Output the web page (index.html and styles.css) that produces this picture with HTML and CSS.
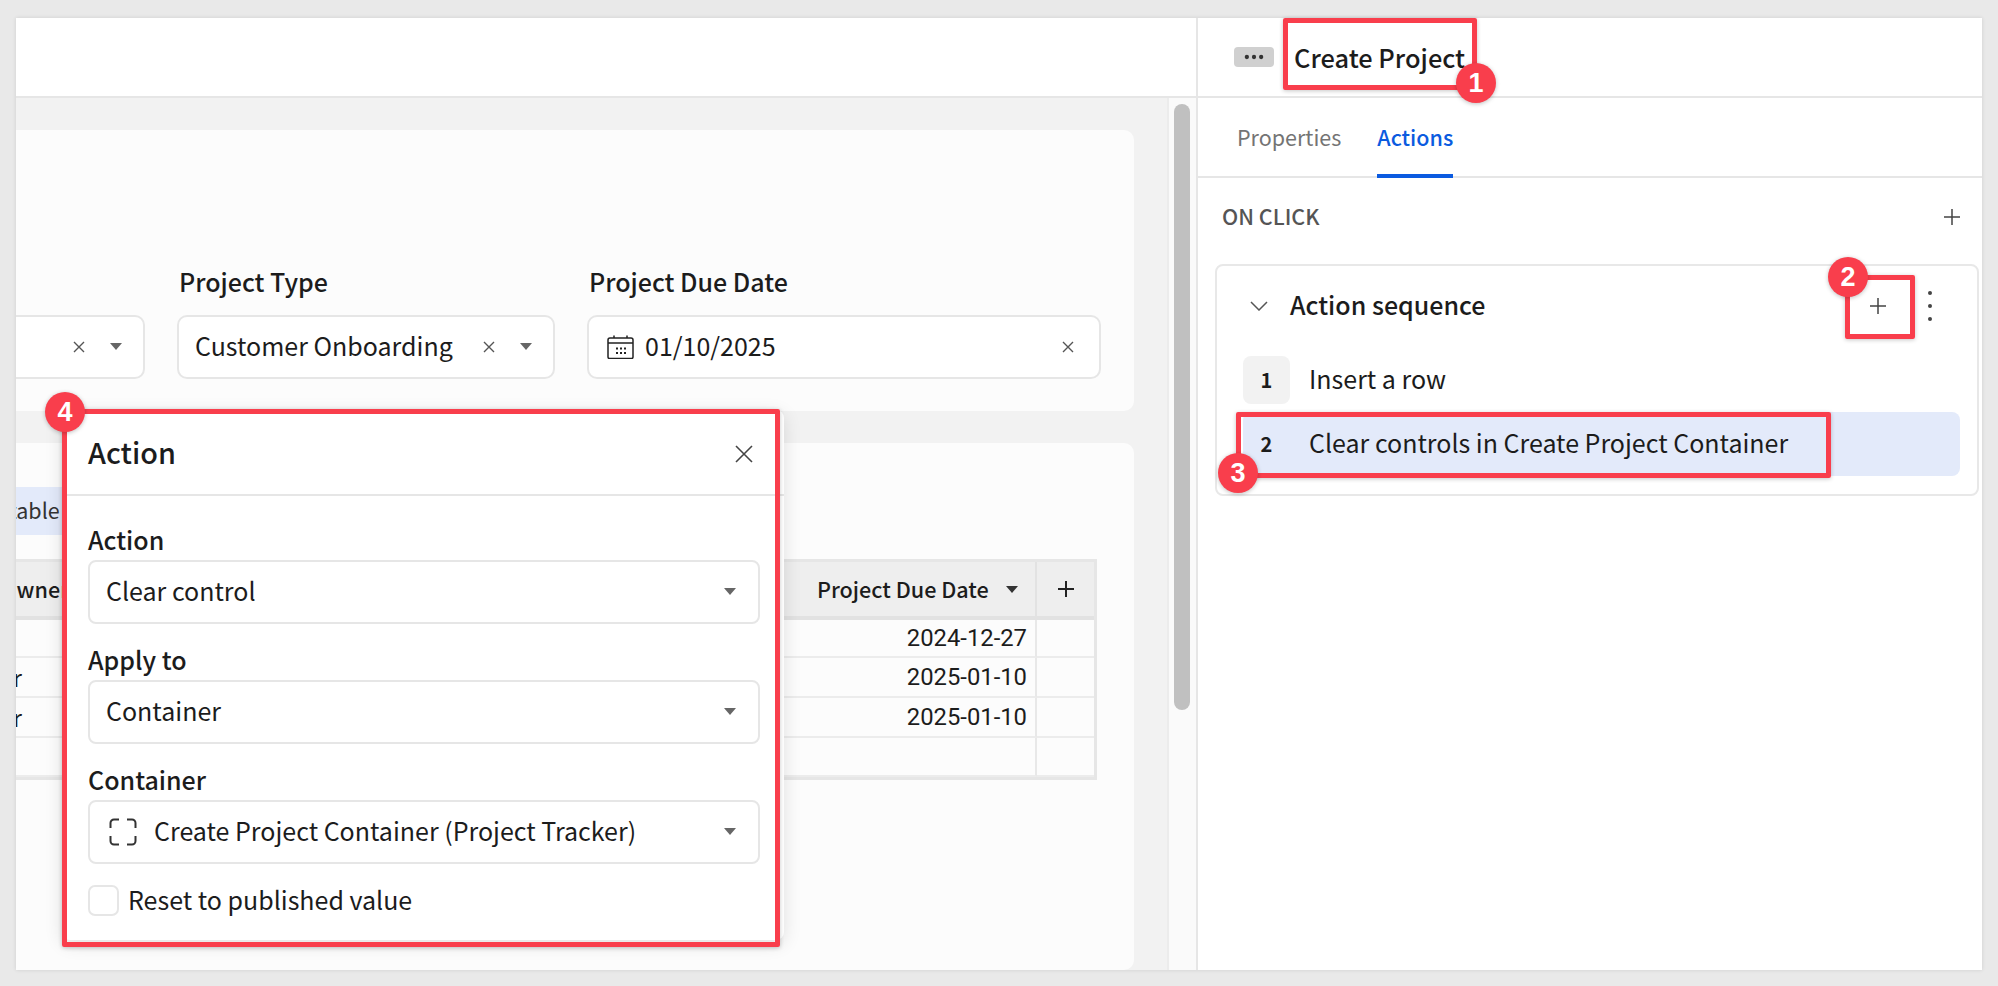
FILE: index.html
```html
<!DOCTYPE html>
<html lang="en">
<head>
<meta charset="utf-8">
<title>Create Project</title>
<link rel="stylesheet" href="styles.css">
</head>
<body>
<div class="window">
  <div class="main">
    <div class="topbar"></div>
    <div class="canvas">
      <div class="scroll-area">
        <section class="card card-form">
          <div class="form-row">
            <div class="field field-a">
              <div class="field-label"></div>
              <div class="input"><span class="input-text"></span>
                <svg class="ico-x" viewBox="0 0 12 12"><path d="M1 1l10 10M11 1L1 11"/></svg>
                <span class="caret"></span></div>
            </div>
            <div class="field field-b">
              <div class="field-label">Project Type</div>
              <div class="input"><span class="input-text">Customer Onboarding</span>
                <svg class="ico-x" viewBox="0 0 12 12"><path d="M1 1l10 10M11 1L1 11"/></svg>
                <span class="caret"></span></div>
            </div>
            <div class="field field-c">
              <div class="field-label">Project Due Date</div>
              <div class="input input-date">
                <svg class="ico-cal" viewBox="0 0 27 24"><path d="M3 3h21a2 2 0 0 1 2 2v17a1.500 1.500 0 0 1-1.500 1.500h-22A1.500 1.500 0 0 1 1 22V5a2 2 0 0 1 2-2zM1 8h25M7 .5v3M20 .5v3"/><path class="dots" d="M9 12.500h2v2H9zM13 12.500h2v2h-2zM17 12.500h2v2h-2zM9 17h2v2H9zM13 17h2v2h-2zM17 17h2v2h-2z"/></svg>
                <span class="input-text">01/10/2025</span>
                <svg class="ico-x" viewBox="0 0 12 12"><path d="M1 1l10 10M11 1L1 11"/></svg>
              </div>
            </div>
          </div>
        </section>
        <section class="card card-table">
          <div class="pill">Editable</div>
          <div class="table-wrap">
            <div class="table">
              <div class="th th-owner">Project Owner</div>
              <div class="th th-mid"></div>
              <div class="th th-date">Project Due Date<span class="caret caret-dark"></span></div>
              <div class="th th-add"><svg class="ico-plus-bold" viewBox="0 0 16 16"><path d="M8 0v16M0 8h16"/></svg></div>

              <div class="td td-owner"></div><div class="td"></div><div class="td td-date">2024-12-27</div><div class="td td-end"></div>
              <div class="td td-owner">Peter Miller</div><div class="td"></div><div class="td td-date">2025-01-10</div><div class="td td-end"></div>
              <div class="td td-owner">Peter Miller</div><div class="td"></div><div class="td td-date">2025-01-10</div><div class="td td-end"></div>
              <div class="td td-owner"></div><div class="td"></div><div class="td td-date"></div><div class="td td-end"></div>
            </div>
          </div>
        </section>
      </div>
      <div class="scroll-track"><div class="scroll-thumb"></div></div>
    </div>
  </div>

  <aside class="panel">
    <div class="panel-head">
      <div class="more-btn"><svg viewBox="0 0 14 4"><circle cx="2" cy="2" r="1.500"/><circle cx="7" cy="2" r="1.500"/><circle cx="12" cy="2" r="1.500"/></svg></div>
      <div class="panel-title">Create Project</div>
    </div>
    <div class="tabs">
      <div class="tab">Properties</div>
      <div class="tab tab-active">Actions</div>
    </div>
    <div class="on-click">
      <span class="on-click-label">ON CLICK</span>
      <svg class="ico-plus" viewBox="0 0 18 18"><path d="M9 1v16M1 9h16"/></svg>
    </div>
    <div class="seq-card">
      <div class="seq-head">
        <svg class="ico-chev" viewBox="0 0 18 10"><path d="M1 1l8 8 8-8"/></svg>
        <span class="seq-title">Action sequence</span>
        <svg class="ico-plus seq-plus" viewBox="0 0 18 18"><path d="M9 1v16M1 9h16"/></svg>
        <svg class="ico-kebab" viewBox="0 0 8 34"><circle cx="4" cy="4" r="2"/><circle cx="4" cy="17" r="2"/><circle cx="4" cy="30" r="2"/></svg>
      </div>
      <div class="seq-row"><span class="seq-num seq-num-box">1</span><span class="seq-text">Insert a row</span></div>
      <div class="seq-row seq-row-active"><span class="seq-num">2</span><span class="seq-text">Clear controls in Create Project Container</span></div>
    </div>
  </aside>
</div>

<div class="popup">
  <div class="popup-head">
    <span class="popup-title">Action</span>
    <svg class="ico-close" viewBox="0 0 18 18"><path d="M1 1l16 16M17 1L1 17"/></svg>
  </div>
  <div class="popup-body">
    <div class="pfield">
      <div class="plabel">Action</div>
      <div class="pselect"><span class="pselect-text">Clear control</span><span class="caret"></span></div>
    </div>
    <div class="pfield">
      <div class="plabel">Apply to</div>
      <div class="pselect"><span class="pselect-text">Container</span><span class="caret"></span></div>
    </div>
    <div class="pfield">
      <div class="plabel">Container</div>
      <div class="pselect">
        <svg class="ico-container" viewBox="0 0 28 28"><path d="M10 1.500H5A3.500 3.500 0 0 0 1.500 5v5M18 1.500h5A3.500 3.500 0 0 1 26.500 5v5M10 26.500H5A3.500 3.500 0 0 1 1.500 23v-5M18 26.500h5a3.500 3.500 0 0 0 3.500-3.500v-5"/></svg>
        <span class="pselect-text">Create Project Container (Project Tracker)</span><span class="caret"></span>
      </div>
    </div>
    <div class="pcheck"><span class="checkbox"></span><span class="pcheck-text">Reset to published value</span></div>
  </div>
</div>

<div class="mark mark-1"></div>
<div class="mark mark-2"></div>
<div class="mark mark-3"></div>
<div class="mark mark-4"></div>
<div class="badge badge-1">1</div>
<div class="badge badge-2">2</div>
<div class="badge badge-3">3</div>
<div class="badge badge-4">4</div>
</body>
</html>
```
FILE: styles.css
```css
* { box-sizing: border-box; }
html, body { margin: 0; height: 100%; }
body {
  position: relative;
  width: 1998px;
  height: 986px;
  overflow: hidden;
  background: #e9e9e9;
  color: #1c1c1c;
  font-family: "Noto Sans CJK JP", "Noto Sans", sans-serif;
  font-size: 25px;
  line-height: 32px;
}
.window {
  position: absolute;
  left: 16px;
  top: 18px;
  width: 1966px;
  height: 952px;
  display: flex;
  background: #fff;
  box-shadow: 0 0 4px rgba(0,0,0,.12);
}
.main { width: 1180px; flex: none; display: flex; flex-direction: column; min-height: 0; }
.topbar { height: 80px; flex: none; background: #fff; border-bottom: 2px solid #e6e6e6; }
.canvas { flex: 1; display: flex; min-height: 0; }
.scroll-area {
  width: 1151px;
  flex: none;
  background: #f2f2f2;
  padding: 32px 33px 0 0;
  display: flex;
  flex-direction: column;
  gap: 32px;
  overflow: hidden;
}
.scroll-track {
  flex: 1;
  background: #fafafa;
  border-left: 2px solid #ececec;
  padding: 6px 0 0 5px;
}
.scroll-thumb { width: 16px; height: 606px; border-radius: 8px; background: #c0c0c0; }
.card { background: #fcfcfc; border-radius: 10px; margin-left: -20px; }
.card-form { height: 281px; flex: none; padding: 135px 33px 0 0; }
.form-row { display: flex; justify-content: flex-end; gap: 32px; }
.field { flex: none; }
.field-a { width: 400px; }
.field-b { width: 378px; }
.field-c { width: 514px; }
.field-label { font-weight: 500; height: 32px; margin: 0 0 18px 2px; white-space: nowrap; }
.input {
  height: 64px;
  border: 2px solid #e6e6e6;
  border-radius: 10px;
  background: #fff;
  display: flex;
  align-items: center;
  padding: 0 21px 4px 16px;
  white-space: nowrap;
}
.input-text { flex: 1; }
.input-date { padding-left: 18px; }
.input-date .input-text { margin-left: 11px; }
.input .ico-x, .input .caret, .input .ico-cal { margin-top: 3px; }
.field-c .ico-x { margin-right: 4px; }
.ico-x { width: 12px; height: 12px; flex: none; fill: none; stroke: #555; stroke-width: 1.400; margin-right: 25px; }
.ico-cal { width: 27px; height: 24px; flex: none; fill: none; stroke: #222; stroke-width: 1.500; }
.ico-cal .dots { fill: #222; stroke: none; }
.caret {
  width: 0; height: 0; flex: none;
  border-left: 6.500px solid transparent;
  border-right: 6.500px solid transparent;
  border-top: 7px solid #666;
}
.card-table { flex: 1; min-height: 0; padding-top: 44px; display: flex; flex-direction: column; overflow: hidden; }
.pill {
  align-self: flex-start;
  height: 48px;
  line-height: 46px;
  margin-left: -19px;
  padding: 0 24px 0 0;
  background: #e3eafa;
  border-radius: 6px;
  font-size: 21.500px;
  white-space: nowrap;
  color: #333;
}
.table-wrap { display: flex; justify-content: flex-end; margin: 24px 37px 0 0; }
.table {
  flex: none;
  display: grid;
  grid-template-columns: 240px 670px 221px 57px;
  grid-template-rows: 58px 38px 40px 40px 39px;
  border-right: 3px solid #e6e6e6;
  border-bottom: 3px solid #e6e6e6;
  border-top: 3px solid #e6e6e6;
}
.th {
  background: #eeeeee;
  border-bottom: 4px solid #e2e2e2;
  font-weight: 500;
  font-size: 21.600px;
  display: flex;
  align-items: center;
  white-space: nowrap;
  overflow: hidden;
}
.th-owner { justify-content: flex-end; padding-right: 77px; }
.th-date { padding-left: 1px; gap: 17px; border-right: 2px solid #e2e2e2; }
.th-add { justify-content: center; }
.caret-dark { border-top-color: #333; }
.ico-plus-bold { width: 16px; height: 16px; fill: none; stroke: #222; stroke-width: 2; }
.td {
  border-bottom: 2px solid #ececec;
  font-family: Roboto, sans-serif;
  font-size: 23.800px;
  display: flex;
  align-items: center;
  justify-content: flex-end;
  white-space: nowrap;
  background: #fcfcfc;
}
.td-owner { padding-right: 124px; font-family: "Noto Sans CJK JP", sans-serif; font-size: 23px; }
.td-date { padding-right: 8px; border-right: 2px solid #e8e8e8; }

.panel { flex: 1; min-width: 0; border-left: 2px solid #e6e6e6; background: #fff; display: flex; flex-direction: column; }
.panel-head {
  height: 80px; flex: none;
  display: flex; align-items: center; gap: 20px;
  padding-left: 36px;
  border-bottom: 2px solid #e6e6e6;
}
.more-btn { width: 40px; height: 20px; border-radius: 4px; background: #d0d0d0; display: flex; align-items: center; justify-content: center; }
.more-btn svg { width: 20px; height: 6px; fill: #333; }
.panel-title { font-size: 25.400px; font-weight: 500; }
.tabs { height: 80px; flex: none; display: flex; gap: 36px; padding-left: 39px; border-bottom: 2px solid #e6e6e6; }
.tab { height: 80px; line-height: 78px; color: #747474; font-size: 21.500px; }
.tab-active { color: #0b5be0; font-weight: 500; border-bottom: 4px solid #0b5be0; border-radius: 2px 2px 0 0; }
.on-click { height: 78px; flex: none; display: flex; align-items: center; justify-content: space-between; padding: 0 21px 0 24px; }
.on-click-label { font-weight: 500; color: #555; font-size: 21.500px; margin-bottom: 3px; }
.ico-plus { width: 18px; height: 18px; fill: none; stroke: #444; stroke-width: 1.500; flex: none; }
.seq-card {
  margin: 8px 3px 0 17px;
  height: 232px;
  border: 2px solid #e8e8e8;
  border-radius: 8px;
}
.seq-head { height: 82px; display: flex; align-items: center; padding: 0 43px 2px 33px; }
.ico-chev { width: 18px; height: 10px; fill: none; stroke: #555; stroke-width: 1.500; margin-right: 22px; }
.seq-title { font-weight: 500; flex: 1; margin-bottom: 4px; }
.seq-plus { margin-right: 39px; }
.ico-kebab { width: 8px; height: 34px; fill: #444; }
.seq-row { height: 64px; margin: 0 17px 0 26px; display: flex; align-items: center; gap: 19px; border-radius: 8px; }
.seq-text { margin-bottom: 5px; }
.seq-num { width: 47px; height: 48px; line-height: 47px; text-align: center; font-weight: 700; font-size: 20px; border-radius: 8px; flex: none; }
.seq-num-box { background: #f2f2f2; }
.seq-row-active { background: #e3eafa; }

.popup {
  position: absolute;
  left: 62px;
  top: 410px;
  width: 722px;
  height: 530px;
  background: #fff;
  border-radius: 8px;
  box-shadow: 0 4px 18px rgba(0,0,0,.12);
}
.popup-head {
  height: 86px;
  padding: 0 31px 0 26px;
  display: flex; align-items: center; justify-content: space-between;
  border-bottom: 2px solid #e6e6e6;
}
.popup-title { font-size: 28.800px; font-weight: 500; }
.ico-close { width: 18px; height: 18px; fill: none; stroke: #444; stroke-width: 1.600; margin-top: 3px; }
.popup-body { padding: 27px 24px 0 26px; }
.pfield { margin-bottom: 19px; }
.plabel { font-weight: 500; height: 32px; margin-bottom: 5px; }
.pselect {
  height: 64px;
  border: 2px solid #e6e6e6;
  border-radius: 8px;
  display: flex; align-items: center; gap: 17px;
  padding: 0 22px 4px 16px;
  background: #fff;
}
.pselect-text { flex: 1; }
.pselect .caret, .pselect .ico-container { margin-top: 3px; }
.ico-container { width: 28px; height: 28px; fill: none; stroke: #333; stroke-width: 2; flex: none; margin-left: 3px; }
.pcheck { display: flex; align-items: center; gap: 9px; margin-top: 2px; }
.pcheck-text { margin-bottom: 2px; }
.checkbox { width: 31px; height: 31px; border: 2px solid #e6e6e6; border-radius: 7px; flex: none; background: #fff; }

.mark {
  position: absolute;
  border: 5px solid #f93e4c;
  border-radius: 2px;
  box-shadow: 0 1px 4px rgba(0,0,0,.22);
}
.mark-1 { left: 1283px; top: 18px; width: 194px; height: 72px; }
.mark-2 { left: 1845px; top: 275px; width: 70px; height: 64px; }
.mark-3 { left: 1236px; top: 412px; width: 595px; height: 66px; }
.mark-4 { left: 62px; top: 409px; width: 718px; height: 538px; }
.badge {
  position: absolute;
  width: 40px; height: 40px;
  border-radius: 50%;
  background: #f93e4c;
  color: #fff;
  font-family: "Liberation Sans", sans-serif;
  font-weight: 700;
  font-size: 27px;
  line-height: 40px;
  text-align: center;
  box-shadow: 0 1px 4px rgba(0,0,0,.25);
}
.badge-1 { left: 1456px; top: 63px; }
.badge-2 { left: 1828px; top: 257px; }
.badge-3 { left: 1218px; top: 453px; }
.badge-4 { left: 45px; top: 392px; }
```
